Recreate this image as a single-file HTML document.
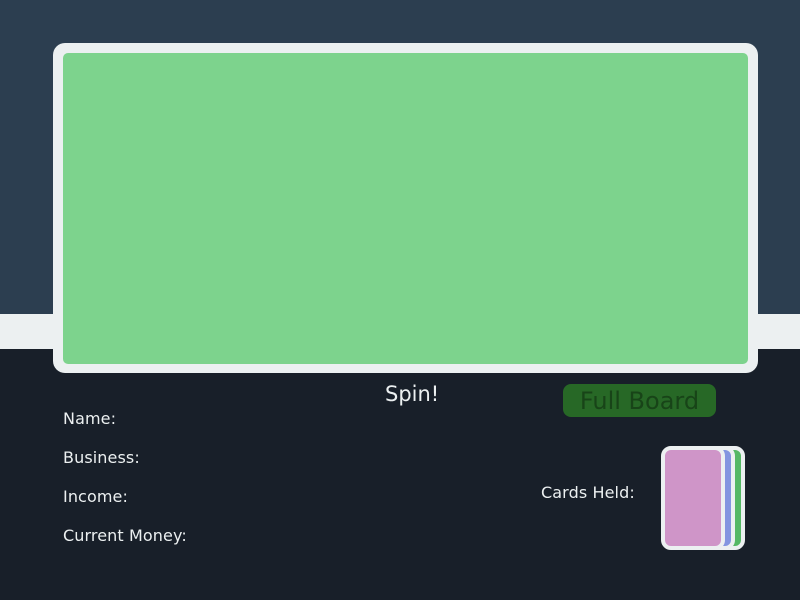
<!DOCTYPE html>
<html><head><style>
*{margin:0;padding:0;box-sizing:border-box}
body{width:800px;height:600px;position:relative;overflow:hidden;background:#181f29;font-family:"DejaVu Sans","Liberation Sans",sans-serif;color:#ecf0f1}
.top{position:absolute;left:0;top:0;width:800px;height:314px;background:#2c3e50}
.band{position:absolute;left:0;top:314px;width:800px;height:35px;background:#ecf0f1}
.board{position:absolute;left:53px;top:43px;width:705px;height:330px;background:#ecf0f1;border-radius:12px}
.inner{position:absolute;left:10px;top:10px;width:685px;height:311px;background:#7dd38d;border-radius:5px}
.t{position:absolute;font-size:16px;white-space:nowrap;letter-spacing:0.1px}
.spin{position:absolute;left:385px;top:382px;font-size:21px}
.btn{position:absolute;left:563px;top:384px;width:153px;height:33px;background:#276826;border-radius:8px;color:#184418;font-size:24px;text-align:center;line-height:35px}
.card{position:absolute;top:446px;width:64px;height:104px;border:4px solid #ecf0f1;border-radius:10px}
</style></head><body>
<div class="top"></div><div class="band"></div>
<div class="board"><div class="inner"></div></div>
<div class="spin">Spin!</div>
<div class="btn">Full Board</div>
<div class="t" style="left:63px;top:409px">Name:</div>
<div class="t" style="left:63px;top:448px">Business:</div>
<div class="t" style="left:63px;top:487px">Income:</div>
<div class="t" style="left:63px;top:526px">Current Money:</div>
<div class="t" style="left:541px;top:483px">Cards Held:</div>
<div class="card" style="left:681px;background:#55b865"></div>
<div class="card" style="left:671px;background:#8395e0"></div>
<div class="card" style="left:661px;background:#cf95c8"></div>
</body></html>
